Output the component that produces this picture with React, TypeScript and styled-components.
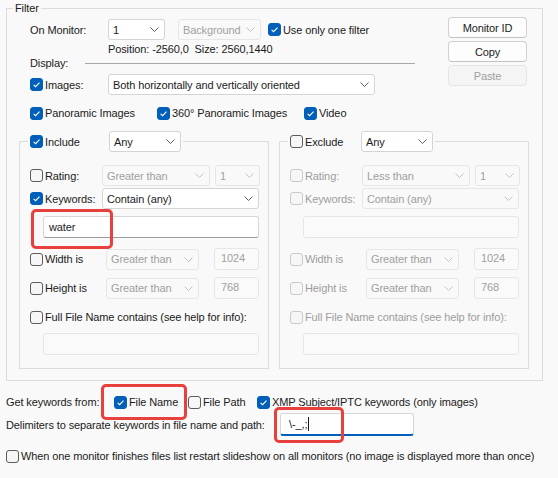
import React from "react";
import styled, { createGlobalStyle } from "styled-components";

const GlobalStyle = createGlobalStyle`
  body {
    margin: 0;
    background: #f9f9f9;
    font-family: "Liberation Sans", Arial, sans-serif;
    font-size: 11px;
    letter-spacing: -0.11px;
    color: #1b1b1b;
  }
`;

interface CheckProps {
  checked?: boolean;
  disabled?: boolean;
}

const Check = ({ checked, disabled }: CheckProps) => (
  <CheckBox $checked={checked} $disabled={disabled}>
    {checked && (
      <svg width="11" height="11" viewBox="0 0 11 11">
        <path
          d="M2.6 5.8 L4.6 7.7 L8.5 3.6"
          fill="none"
          stroke="#ffffff"
          strokeWidth="1.1"
        />
      </svg>
    )}
  </CheckBox>
);

interface CheckItemProps extends CheckProps {
  label: string;
  width?: number;
}

const CheckItem = ({ label, checked, disabled, width }: CheckItemProps) => (
  <CheckLabel $w={width} $disabled={disabled}>
    <Check checked={checked} disabled={disabled} />
    <span>{label}</span>
  </CheckLabel>
);

const Chevron = ({ disabled }: { disabled?: boolean }) => (
  <svg width="9" height="5" viewBox="0 0 9 5">
    <path
      d="M0.5 0.5 L4.5 4.5 L8.5 0.5"
      fill="none"
      stroke={disabled ? "#c4c4c4" : "#5f5f5f"}
      strokeWidth="1"
    />
  </svg>
);

interface ComboProps {
  value: string;
  width: number;
  disabled?: boolean;
}

const Combo = ({ value, width, disabled }: ComboProps) => (
  <ComboBox $w={width} $disabled={disabled}>
    <span>{value}</span>
    <Chevron disabled={disabled} />
  </ComboBox>
);

interface RuleGroupProps {
  title: string;
  titleWidth: number;
  checked: boolean;
  ratingMode: string;
  off?: boolean;
  keywords?: string;
}

const RuleGroup = ({
  title,
  titleWidth,
  checked,
  ratingMode,
  off,
  keywords,
}: RuleGroupProps) => (
  <GroupBox>
    <GroupLegend>
      <CheckItem label={title} checked={checked} width={titleWidth} />
      <Combo value="Any" width={72} />
    </GroupLegend>
    <GroupBody>
      <ControlRow>
        <CheckItem label="Rating:" width={72} disabled={off} />
        <Combo value={ratingMode} width={108} disabled />
        <Spacer $w={5} />
        <Combo value="1" width={45} disabled />
      </ControlRow>
      <ControlRow $top={2}>
        <CheckItem
          label="Keywords:"
          width={72}
          checked={!off}
          disabled={off}
        />
        <Combo value="Contain (any)" width={157} disabled={off} />
      </ControlRow>
      <IndentField $top={7} $w={216} $disabled={off}>
        {keywords}
        {keywords && <Highlight $l={-13} $t={-8} $w={82} $h={40} />}
      </IndentField>
      <ControlRow $top={10} $h={22}>
        <CheckItem label="Width is" width={76} disabled={off} />
        <Combo value="Greater than" width={93} disabled />
        <SizeField $disabled>1024</SizeField>
      </ControlRow>
      <ControlRow $top={7} $h={22}>
        <CheckItem label="Height is" width={76} disabled={off} />
        <Combo value="Greater than" width={93} disabled />
        <SizeField $disabled>768</SizeField>
      </ControlRow>
      <ControlRow $top={10} $h={16}>
        <CheckItem
          label="Full File Name contains (see help for info):"
          disabled={off}
        />
      </ControlRow>
      <IndentField $top={8} $w={216} $disabled />
    </GroupBody>
  </GroupBox>
);

const App = () => {
  return (
    <Page>
      <GlobalStyle />
      <FilterGroup>
        <FilterLegend>Filter</FilterLegend>
        <TopArea>
          <MainColumn>
            <ControlRow $top={3}>
              <FieldLabel $w={78}>On Monitor:</FieldLabel>
              <Combo value="1" width={57} />
              <Spacer $w={13} />
              <Combo value="Background" width={83} disabled />
              <Spacer $w={7} />
              <CheckItem label="Use only one filter" checked />
            </ControlRow>
            <InfoLine>Position: -2560,0&nbsp;&nbsp;Size: 2560,1440</InfoLine>
            <DisplayRow>
              <FieldLabel $w={55}>Display:</FieldLabel>
              <Divider />
            </DisplayRow>
            <ControlRow $top={5}>
              <CheckItem label="Images:" checked width={78} />
              <Combo value="Both horizontally and vertically oriented" width={267} />
            </ControlRow>
            <ControlRow $top={10} $h={16}>
              <CheckItem label="Panoramic Images" checked width={127} />
              <CheckItem label="360° Panoramic Images" checked width={147} />
              <CheckItem label="Video" checked />
            </ControlRow>
          </MainColumn>
          <ButtonColumn>
            <PushButton>Monitor ID</PushButton>
            <PushButton>Copy</PushButton>
            <PushButton $disabled>Paste</PushButton>
          </ButtonColumn>
        </TopArea>
        <Groups>
          <RuleGroup
            title="Include"
            titleWidth={79}
            checked
            ratingMode="Greater than"
            keywords="water"
          />
          <RuleGroup
            title="Exclude"
            titleWidth={71}
            checked={false}
            ratingMode="Less than"
            off
          />
        </Groups>
      </FilterGroup>

      <ControlRow $top={13} $h={16}>
        <FieldLabel $w={108}>Get keywords from:</FieldLabel>
        <Marked>
          <CheckItem label="File Name" checked width={74} />
          <Highlight $l={-13} $t={-12} $w={86} $h={36} />
        </Marked>
        <CheckItem label="File Path" width={69} />
        <CheckItem label="XMP Subject/IPTC keywords (only images)" checked />
      </ControlRow>
      <ControlRow $top={3} $h={23}>
        <FieldLabel $w={274}>
          Delimiters to separate keywords in file name and path:
        </FieldLabel>
        <FocusField>
          {"\\-_,;"}
          <Caret />
          <Highlight $l={-7} $t={-7} $w={70} $h={36} />
        </FocusField>
      </ControlRow>
      <ControlRow $top={12} $h={16}>
        <CheckItem label="When one monitor finishes files list restart slideshow on all monitors (no image is displayed more than once)" />
      </ControlRow>
    </Page>
  );
};

export default App;

const Page = styled.div`
  width: 558px;
  height: 478px;
  padding: 0 6px;
  box-sizing: border-box;
  overflow: hidden;
`;

const FilterGroup = styled.fieldset`
  width: 537px;
  min-width: 0;
  box-sizing: border-box;
  margin: 0;
  padding: 0 0 11px 0;
  border: 1px solid #dcdcdc;
`;

const FilterLegend = styled.legend`
  margin-left: 6px;
  padding: 0 2px;
  line-height: 16px;
  height: 16px;
`;

const TopArea = styled.div`
  display: flex;
  padding: 0 15px 0 23px;
`;

const MainColumn = styled.div`
  flex: 1;
  display: flex;
  flex-direction: column;
`;

const ButtonColumn = styled.div`
  display: flex;
  flex-direction: column;
  gap: 3px;
  margin-top: 1px;
`;

const PushButton = styled.div<{ $disabled?: boolean }>`
  width: 79px;
  height: 21px;
  box-sizing: border-box;
  display: flex;
  align-items: center;
  justify-content: center;

  background: ${(p) => (p.$disabled ? "#f5f5f5" : "#fdfdfd")};
  color: ${(p) => (p.$disabled ? "#a0a0a0" : "#1b1b1b")};
  border: 1px solid ${(p) => (p.$disabled ? "#e5e5e5" : "#d0d0d0")};
  border-bottom-color: ${(p) => (p.$disabled ? "#e5e5e5" : "#c2c2c2")};
  border-radius: 4px;
`;

const ControlRow = styled.div<{ $top?: number; $h?: number }>`
  display: flex;
  align-items: center;
  margin-top: ${(p) => p.$top ?? 0}px;
  height: ${(p) => p.$h ?? 21}px;
  white-space: nowrap;
`;

const FieldLabel = styled.span<{ $w: number }>`
  width: ${(p) => p.$w}px;
  flex-shrink: 0;
`;

const Spacer = styled.span<{ $w: number }>`
  width: ${(p) => p.$w}px;
  flex-shrink: 0;
`;

const InfoLine = styled.div`
  margin: 3px 0 0 78px;
  height: 13px;
  line-height: 13px;
`;

const DisplayRow = styled.div`
  display: flex;
  align-items: center;
  height: 13px;
`;

const Divider = styled.div`
  width: 330px;
  height: 1px;
  background: #a8a8a8;
  margin-top: 1px;
`;

const CheckLabel = styled.label<{ $w?: number; $disabled?: boolean }>`
  display: flex;
  align-items: center;
  gap: 2px;
  flex-shrink: 0;
  width: ${(p) => (p.$w ? `${p.$w}px` : "auto")};
  color: ${(p) => (p.$disabled ? "#9d9d9d" : "#1b1b1b")};
`;

const CheckBox = styled.span<{ $checked?: boolean; $disabled?: boolean }>`
  width: 13px;
  height: 13px;
  box-sizing: border-box;
  display: flex;
  align-items: center;
  justify-content: center;
  flex-shrink: 0;

  background: ${(p) => (p.$checked ? "#005fb8" : "#f6f6f6")};
  border: 1px solid
    ${(p) => (p.$checked ? "#005fb8" : p.$disabled ? "#cacaca" : "#5c5c5c")};
  border-radius: 3px;
`;

const ComboBox = styled.div<{ $w: number; $disabled?: boolean }>`
  width: ${(p) => p.$w}px;
  height: 21px;
  box-sizing: border-box;
  flex-shrink: 0;
  display: flex;
  align-items: center;
  justify-content: space-between;
  gap: 2px;
  padding: 0 5px 0 4px;

  background: ${(p) => (p.$disabled ? "#f9f9f9" : "#ffffff")};
  color: ${(p) => (p.$disabled ? "#a0a0a0" : "#1b1b1b")};
  border: 1px solid ${(p) => (p.$disabled ? "#e6e6e6" : "#d4d4d4")};
  border-radius: 3px;

  svg {
    flex-shrink: 0;
  }
`;

const GroupBox = styled.fieldset`
  width: 250px;
  min-width: 0;
  box-sizing: border-box;
  margin: 0;
  padding: 0;
  border: 1px solid #dcdcdc;
`;

const GroupLegend = styled.legend`
  display: flex;
  align-items: center;
  margin-left: 8px;
  padding: 0 2px;
  height: 21px;
`;

const GroupBody = styled.div`
  display: flex;
  flex-direction: column;
  padding: 13px 9px 13px 10px;
`;

const Groups = styled.div`
  display: flex;
  gap: 10px;
  margin-top: 10px;
  padding-left: 12px;
`;

const TextField = styled.div<{ $w?: number; $disabled?: boolean }>`
  position: relative;
  height: 22px;
  box-sizing: border-box;
  flex-shrink: 0;
  display: flex;
  align-items: center;
  padding-left: 5px;

  background: ${(p) => (p.$disabled ? "#fafafa" : "#ffffff")};
  color: ${(p) => (p.$disabled ? "#a0a0a0" : "#1b1b1b")};
  border: 1px solid ${(p) => (p.$disabled ? "#e6e6e6" : "#d6d6d6")};
  border-bottom-color: ${(p) => (p.$disabled ? "#e6e6e6" : "#9c9c9c")};
  border-radius: 3px;
`;

const IndentField = styled(TextField)<{ $top: number; $w: number }>`
  width: ${(p) => p.$w}px;
  margin: ${(p) => p.$top}px 0 0 13px;
`;

const SizeField = styled(TextField)`
  width: 45px;
  margin-left: 15px;
  align-items: flex-start;
  padding: 3px 0 0 6px;
`;

const FocusField = styled(TextField)`
  width: 134px;
  height: 23px;
  padding-left: 8px;
  border-bottom: 2px solid #005fb8;
`;

const Caret = styled.span`
  width: 1px;
  height: 14px;
  margin-left: 1px;
  background: #1b1b1b;
`;

const Marked = styled.div`
  position: relative;
  display: flex;
  align-items: center;
`;

// red marker frame laid over a control
const Highlight = styled.span<{ $l: number; $t: number; $w: number; $h: number }>`
  position: absolute;
  left: ${(p) => p.$l}px;
  top: ${(p) => p.$t}px;
  width: ${(p) => p.$w}px;
  height: ${(p) => p.$h}px;
  box-sizing: border-box;
  border: 3px solid #e8403c;
  border-radius: 5px;
  pointer-events: none;
`;
